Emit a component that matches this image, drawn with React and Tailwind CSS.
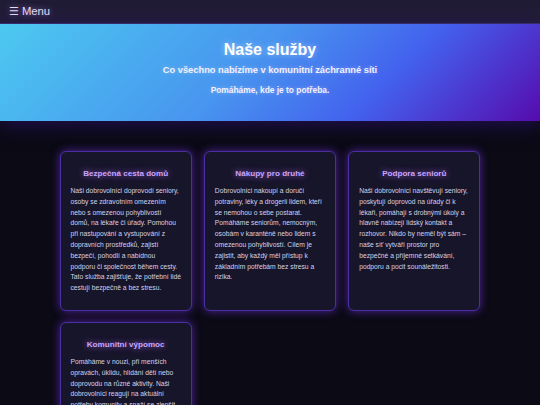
import React from "react";

const cards = [
  {
    title: "Bezpečná cesta domů",
    lines: [
      "Naši dobrovolníci doprovodí seniory,",
      "osoby se zdravotním omezením",
      "nebo s omezenou pohyblivostí",
      "domů, na lékaře či úřady. Pomohou",
      "při nastupování a vystupování z",
      "dopravních prostředků, zajistí",
      "bezpečí, pohodlí a nabídnou",
      "podporu či společnost během cesty.",
      "Tato služba zajišťuje, že potřební lidé",
      "cestují bezpečně a bez stresu.",
    ],
  },
  {
    title: "Nákupy pro druhé",
    lines: [
      "Dobrovolníci nakoupí a doručí",
      "potraviny, léky a drogerii lidem, kteří",
      "se nemohou o sebe postarat.",
      "Pomáháme seniorům, nemocným,",
      "osobám v karanténě nebo lidem s",
      "omezenou pohyblivostí. Cílem je",
      "zajistit, aby každý měl přístup k",
      "základním potřebám bez stresu a",
      "rizika.",
    ],
  },
  {
    title: "Podpora seniorů",
    lines: [
      "Naši dobrovolníci navštěvují seniory,",
      "poskytují doprovod na úřady či k",
      "lékaři, pomáhají s drobnými úkoly a",
      "hlavně nabízejí lidský kontakt a",
      "rozhovor. Nikdo by neměl být sám –",
      "naše síť vytváří prostor pro",
      "bezpečné a příjemné setkávání,",
      "podporu a pocit sounáležitosti.",
    ],
  },
  {
    title: "Komunitní výpomoc",
    lines: [
      "Pomáháme v nouzi, při menších",
      "opravách, úklidu, hlídání dětí nebo",
      "doprovodu na různé aktivity. Naši",
      "dobrovolníci reagují na aktuální",
      "potřeby komunity a snaží se zlepšit",
      "každodenní život všech, kteří to",
      "potřebují.",
    ],
  },
];

export default function App() {
  return (
    <div className="bg-[#0b0a15] font-['Liberation_Sans',Arial,sans-serif] overflow-hidden h-[405px]">
      <nav className="h-[24px] bg-[#211c36] border-b border-[#3a3168] flex items-center pl-[9px]">
        <span className="text-[11.3px] text-[#e6def5] leading-none [text-shadow:0_0_6px_rgba(190,150,255,0.7)]">
          <span className="font-['DejaVu_Sans',sans-serif] text-[11px] mr-[3px]">☰</span>Menu
        </span>
      </nav>
      <header className="relative z-10 h-[97px] bg-[linear-gradient(135deg,#4cc9f0_0%,#4895ef_45%,#4361ee_70%,#560bad_100%)] shadow-[0_4px_18px_rgba(50,20,130,0.55)] text-center text-white pt-[16px]">
        <h1 className="text-[16px] font-bold leading-[19px] [text-shadow:0_0_6px_rgba(255,255,255,0.45)]">Naše služby</h1>
        <p className="mt-[6px] text-[9.3px] font-bold leading-[11px] text-[#f4f0ff] [text-shadow:0_0_4px_rgba(255,255,255,0.35)]">
          Co všechno nabízíme v komunitní záchranné síti
        </p>
        <p className="mt-[9px] text-[8.4px] font-bold leading-[10px] text-[#f4f0ff] [text-shadow:0_0_4px_rgba(255,255,255,0.35)]">
          Pomáháme, kde je to potřeba.
        </p>
      </header>
      <main className="pt-[30px]">
        <div className="mx-auto w-[421px] grid grid-cols-3 gap-x-[12px] gap-y-[11px]">
          {cards.map((c) => (
            <div
              key={c.title}
              className="bg-[#17152a] border border-[#4a2fa3] rounded-[6px] shadow-[0_0_10px_rgba(120,50,235,0.65)] pt-[17px] pb-[16px] px-[10px]"
            >
              <h3 className="text-center text-[8.1px] font-bold leading-[10px] text-[#c9a3ff] [text-shadow:0_0_6px_rgba(190,120,255,0.8)]">
                {c.title}
              </h3>
              <p className="mt-[7px] text-[6.72px] leading-[10.8px] text-[#d6d1e6]">
                {c.lines.map((l, i) => (
                  <span key={i} className="block whitespace-nowrap">
                    {l}
                  </span>
                ))}
              </p>
            </div>
          ))}
        </div>
      </main>
    </div>
  );
}
